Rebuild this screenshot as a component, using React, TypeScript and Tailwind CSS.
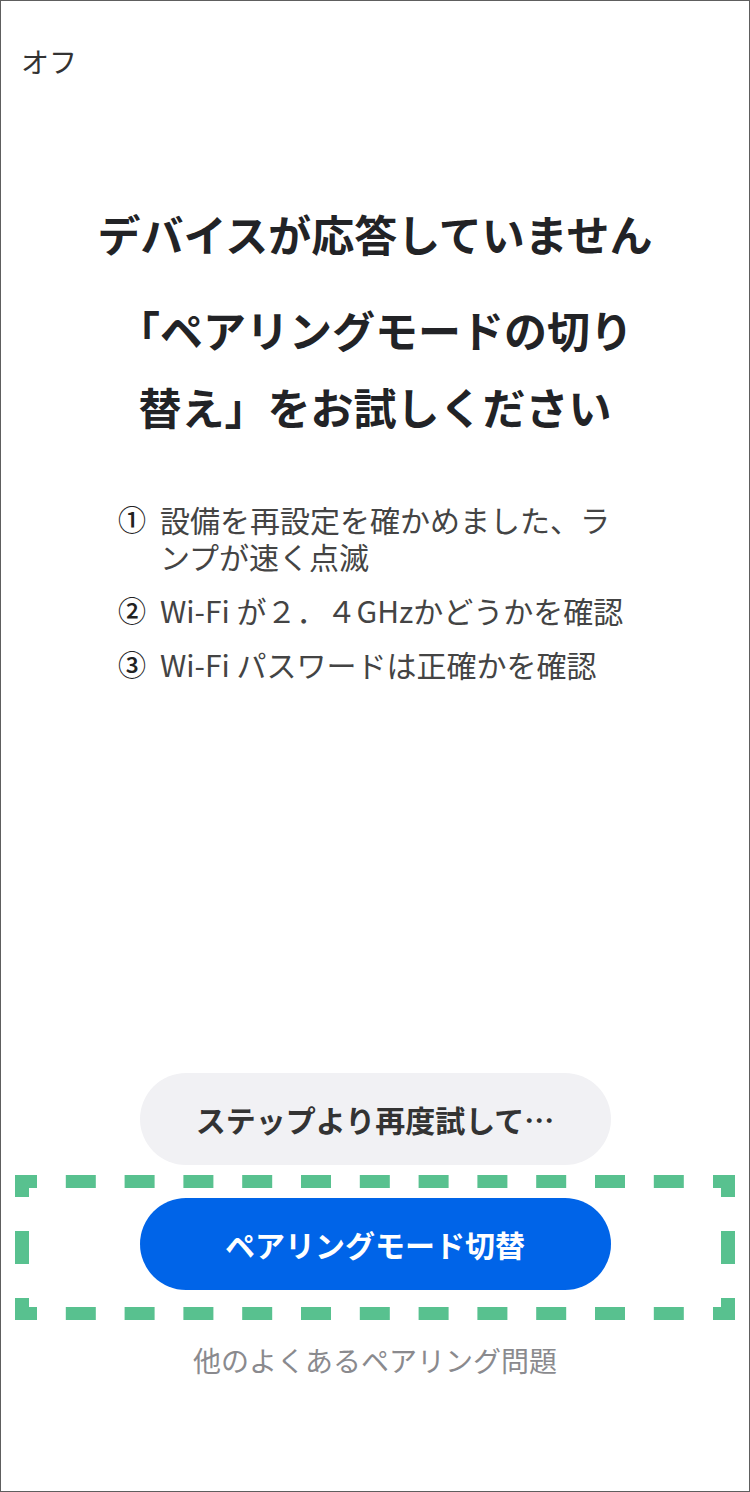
import React from 'react';

const jp = { fontFamily: '"Noto Sans CJK JP", "Noto Sans", sans-serif' };

const steps = [
    { mark: '①', text: '設備を再設定を確かめました、ランプが速く点滅' },
    { mark: '②', text: 'Wi-Fi が２．４GHzかどうかを確認' },
    { mark: '③', text: 'Wi-Fi パスワードは正確かを確認' },
];

// highlight frame drawn over the primary button
const DashedFrame: React.FC = () => {
    const color = '#58c18f';
    const dashes = Array.from({ length: 11 }, (_, i) => 22 + 28.8 + i * 58.8);
    return (
        <svg className="absolute inset-0 pointer-events-none" width="720" height="145" viewBox="0 0 720 145">
            <g fill={color}>
                {/* corners */}
                <rect x="0" y="0" width="22" height="13" />
                <rect x="0" y="0" width="14" height="22" />
                <rect x="698" y="0" width="22" height="13" />
                <rect x="706" y="0" width="14" height="22" />
                <rect x="0" y="132" width="22" height="13" />
                <rect x="0" y="123" width="14" height="22" />
                <rect x="698" y="132" width="22" height="13" />
                <rect x="706" y="123" width="14" height="22" />
                {/* top / bottom */}
                {dashes.map(x => (
                    <React.Fragment key={x}>
                        <rect x={x} y="0" width="30" height="13" />
                        <rect x={x} y="132" width="30" height="13" />
                    </React.Fragment>
                ))}
                {/* sides */}
                <rect x="0" y="56" width="14" height="33" />
                <rect x="706" y="56" width="14" height="33" />
            </g>
        </svg>
    );
};

const App: React.FC = () => {
    return (
        <div className="w-[750px] h-[1492px] border border-[#5e5e5e] bg-white flex flex-col" style={jp}>
            <div className="pt-[40px] pl-[20px] text-[28px] leading-[40px] text-[#333]">オフ</div>

            <h1 className="mt-[124px] text-center text-[43px] leading-[56px] font-bold text-[#222326]">
                デバイスが応答していません
            </h1>
            <h2 className="mt-[30px] mx-auto max-w-[530px] text-center text-[43px] leading-[77px] font-bold text-[#222326]">
                「ペアリングモードの切り替え」をお試しください
            </h2>

            <ul className="mt-[56px] ml-[117px] w-[520px] flex flex-col gap-[17px] text-[30px] leading-[37px] text-[#444]">
                {steps.map(s => (
                    <li key={s.mark} className="flex">
                        <span className="w-[42px] shrink-0 text-[28px] font-medium text-[#222]">{s.mark}</span>
                        <span className="w-[475px]">{s.text}</span>
                    </li>
                ))}
            </ul>

            <div className="flex-1" />

            <div className="flex justify-center">
                <button className="w-[471px] h-[92px] rounded-full bg-[#f1f1f4] text-[30px] font-bold text-[#333]">
                    ステップより再度試して…
                </button>
            </div>

            <div className="relative mt-[10px] ml-[14px] w-[720px] h-[145px] pt-[23px] flex justify-center">
                <button className="w-[471px] h-[92px] rounded-full bg-[#0064e8] text-[30px] font-bold text-white">
                    ペアリングモード切替
                </button>
                <DashedFrame />
            </div>

            <div className="mt-[20px] mb-[111px] text-center text-[28px] leading-[40px] text-[#8a8a8e]">
                他のよくあるペアリング問題
            </div>
        </div>
    );
};

export default App;
